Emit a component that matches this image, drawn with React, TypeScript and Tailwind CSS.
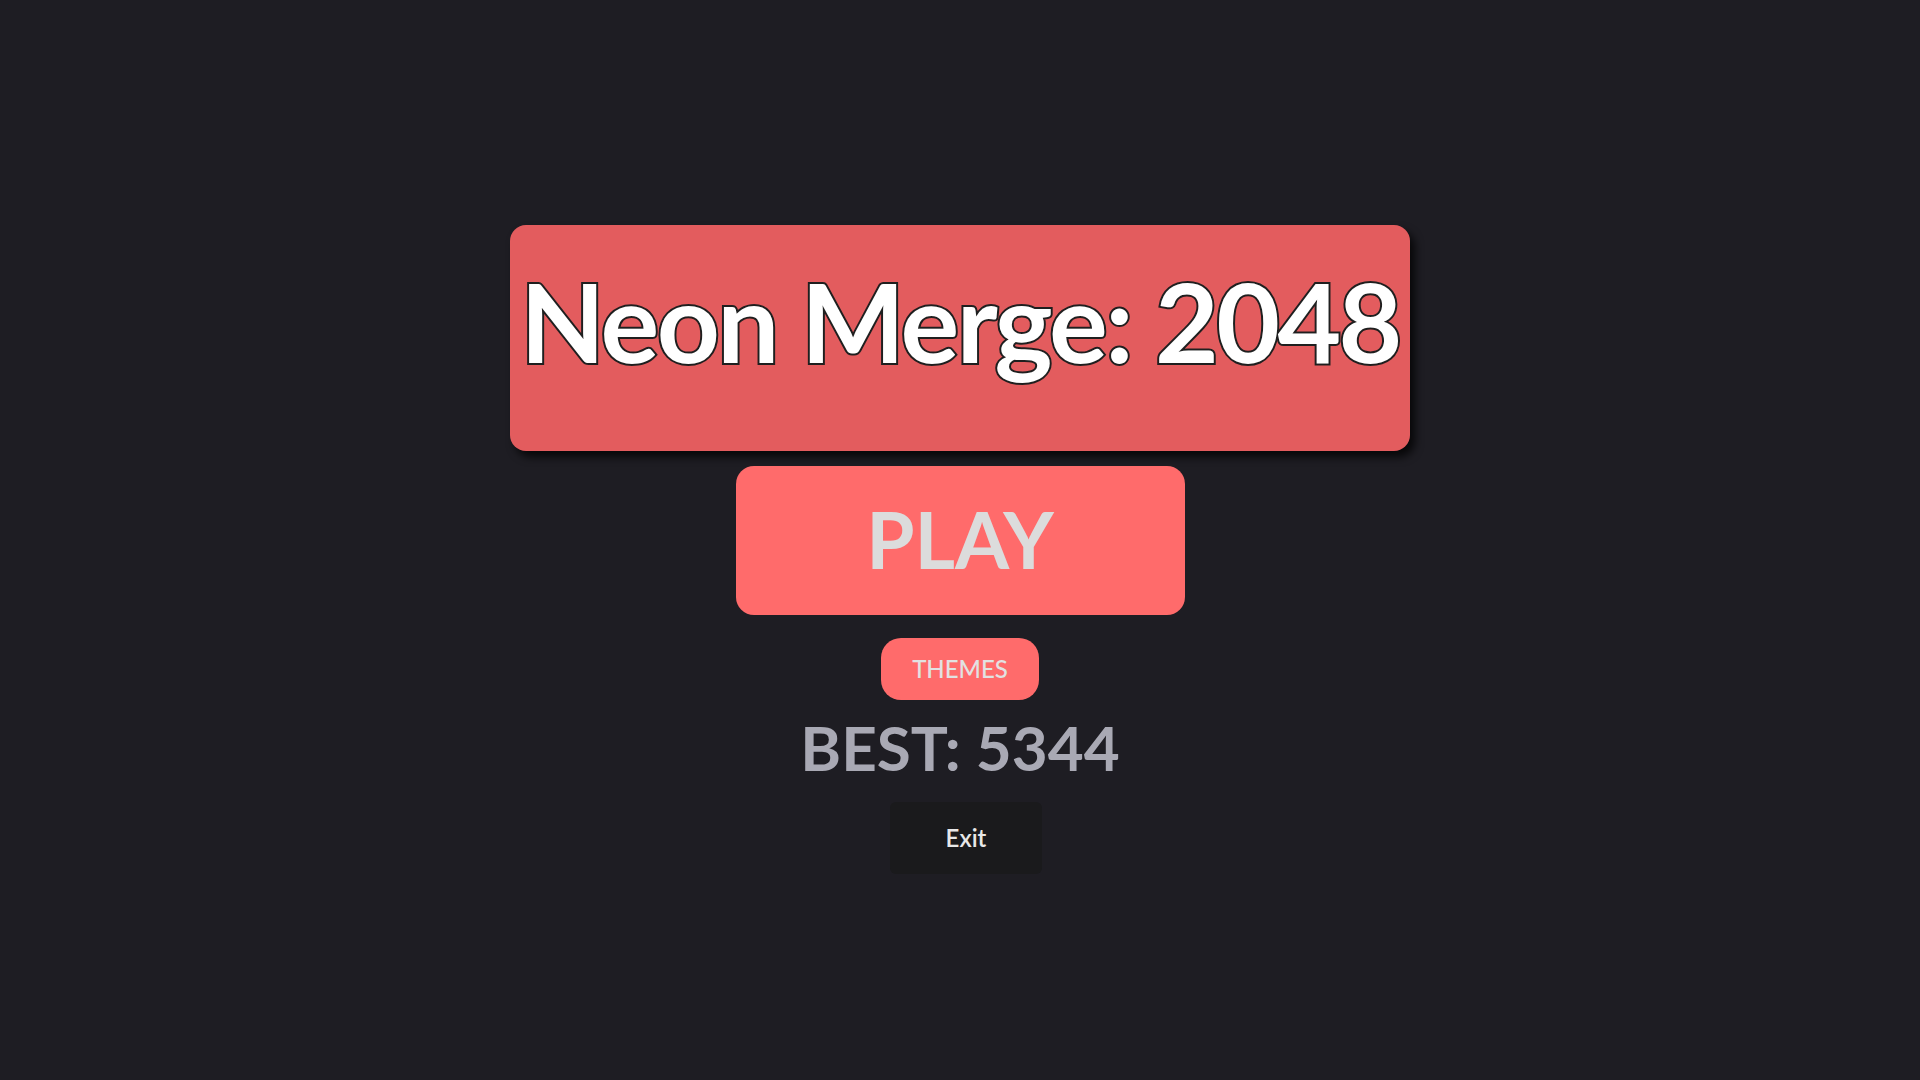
import React from "react";

const font = { fontFamily: "Lato, 'Noto Sans', sans-serif" };

export default function App() {
  return (
    <main
      className="min-h-screen w-full bg-[#1e1d23] flex flex-col items-center pt-[225px]"
      style={font}
    >
      {/* title card */}
      <div className="w-[900px] h-[226px] rounded-[16px] bg-[#e35c5e] shadow-[5px_6px_8px_rgba(0,0,0,0.75)] flex justify-center pt-[40px]">
        <h1 className="whitespace-nowrap text-[110px] leading-none font-bold text-white tracking-[-2.6px] [-webkit-text-stroke:4px_#1f1f1f] [paint-order:stroke_fill]">
          Neon Merge: 2048
        </h1>
      </div>

      <button className="mt-[15px] w-[449px] h-[149px] rounded-[18px] bg-[#ff6b6b] text-[#dcdcdc] text-[78px] font-bold leading-none flex items-center justify-center pb-[4px]">
        PLAY
      </button>

      <button className="mt-[23px] w-[158px] h-[62px] rounded-[20px] bg-[#ff6b6b] text-[#e2e2e2] text-[24px] font-medium leading-none flex items-center justify-center">
        THEMES
      </button>

      <div className="mt-[10px] text-[62px] leading-[1.2] font-bold text-[#a9a9b4]">
        BEST: 5344
      </div>

      <button className="mt-[18px] ml-3 w-[152px] h-[72px] rounded-[6px] bg-[#1a1a1c] text-[#e8e8e8] text-[24px] font-semibold leading-none flex items-center justify-center">
        Exit
      </button>
    </main>
  );
}
